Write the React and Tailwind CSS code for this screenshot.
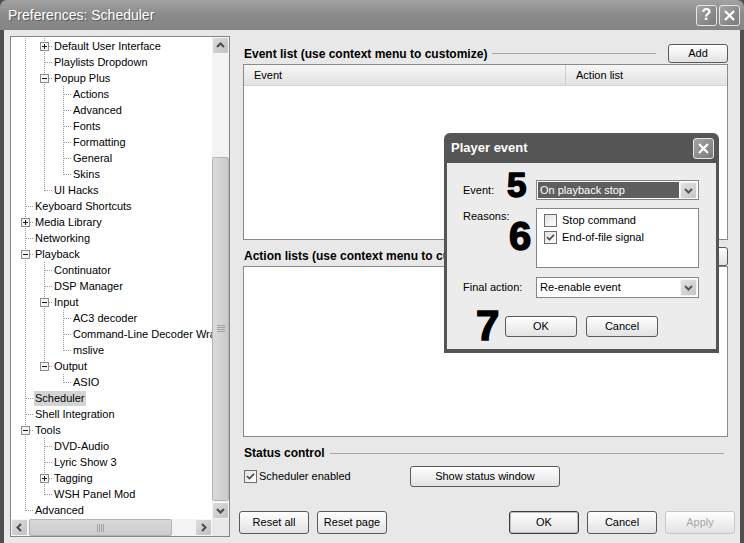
import React from 'react';

const tree = [
  [1, 'Default User Interface', 'plus'],
  [1, 'Playlists Dropdown'],
  [1, 'Popup Plus', 'minus'],
  [2, 'Actions'],
  [2, 'Advanced'],
  [2, 'Fonts'],
  [2, 'Formatting'],
  [2, 'General'],
  [2, 'Skins'],
  [1, 'UI Hacks'],
  [0, 'Keyboard Shortcuts'],
  [0, 'Media Library', 'plus'],
  [0, 'Networking'],
  [0, 'Playback', 'minus'],
  [1, 'Continuator'],
  [1, 'DSP Manager'],
  [1, 'Input', 'minus'],
  [2, 'AC3 decoder'],
  [2, 'Command-Line Decoder Wrapper'],
  [2, 'mslive'],
  [1, 'Output', 'minus'],
  [2, 'ASIO'],
  [0, 'Scheduler', null, true],
  [0, 'Shell Integration'],
  [0, 'Tools', 'minus'],
  [1, 'DVD-Audio'],
  [1, 'Lyric Show 3'],
  [1, 'Tagging', 'plus'],
  [1, 'WSH Panel Mod'],
  [0, 'Advanced'],
];

// does a sibling at this level follow before the branch closes?
const hasNext = (i, lvl) => {
  for (let j = i + 1; j < tree.length; j++) {
    if (tree[j][0] < lvl) return false;
    if (tree[j][0] === lvl) return true;
  }
  return false;
};

function TreeRow({ i }) {
  const [level, label, exp, selected] = tree[i];
  const cx = 14.5 + 19 * level;
  const w = 23 + 19 * level;
  return (
    <div className="flex h-[16px] items-center whitespace-nowrap">
      <svg width={w} height="16" className="shrink-0" shapeRendering="crispEdges">
        <g stroke="#9a9a9a" strokeDasharray="1 1">
          {Array.from({ length: level }, (_, a) =>
            hasNext(i, a) ? <line key={a} x1={14.5 + 19 * a} y1="0" x2={14.5 + 19 * a} y2="16" /> : null
          )}
          <line x1={cx} y1="0" x2={cx} y2={hasNext(i, level) ? 16 : 9} />
          <line x1={cx} y1="8.5" x2={w - 1} y2="8.5" />
        </g>
        {exp && (
          <g>
            <rect x={cx - 4} y="4.5" width="8" height="8" fill="#f4f4f4" stroke="#8c8c8c" />
            <line x1={cx - 2.5} y1="8.5" x2={cx + 2.5} y2="8.5" stroke="#1a1a1a" />
            {exp === 'plus' && <line x1={cx} y1="6" x2={cx} y2="11" stroke="#1a1a1a" />}
          </g>
        )}
      </svg>
      <span className={`px-[1px] leading-[15px] ${selected ? 'bg-[#d4d4d4]' : ''}`}>{label}</span>
    </div>
  );
}

const chevrons = {
  up: 'M4.5 9.5 L8 6 L11.5 9.5',
  down: 'M4.5 6.5 L8 10 L11.5 6.5',
  left: 'M9.5 4.5 L6 8 L9.5 11.5',
  right: 'M6.5 4.5 L10 8 L6.5 11.5',
};

function Chevron({ dir, color = '#4a4a4a' }) {
  return (
    <svg width="15" height="15" viewBox="0.5 0.5 15 15">
      <path d={chevrons[dir]} fill="none" stroke={color} strokeWidth="2" />
    </svg>
  );
}

function ScrollBtn({ dir }) {
  return (
    <div className="flex h-[17px] w-[17px] shrink-0 items-center justify-center rounded-[2px] border border-[#f6f6f6] bg-gradient-to-br from-[#dcdcdc] to-[#c2c2c2]">
      <Chevron dir={dir} />
    </div>
  );
}

function Grip({ vertical }) {
  return vertical ? (
    <svg width="8" height="8" shapeRendering="crispEdges">
      {[0.5, 2.5, 4.5, 6.5].map((y) => (
        <line key={y} x1="0" y1={y} x2="8" y2={y} stroke="#a2a2a2" />
      ))}
    </svg>
  ) : (
    <svg width="8" height="8" shapeRendering="crispEdges">
      {[0.5, 2.5, 4.5, 6.5].map((x) => (
        <line key={x} x1={x} y1="0" x2={x} y2="8" stroke="#a2a2a2" />
      ))}
    </svg>
  );
}

function TreePanel() {
  return (
    <div className="flex h-[501px] w-[220px] shrink-0 flex-col border border-[#858585] bg-white">
      <div className="flex h-[482px]">
        <div className="w-[201px] overflow-hidden pt-[1px]">
          {tree.map((_, i) => (
            <TreeRow key={i} i={i} />
          ))}
        </div>
        <div className="flex w-[17px] flex-col bg-[#f3f3f3]">
          <ScrollBtn dir="up" />
          <div className="flex flex-1 flex-col pb-[1px]">
            <div className="h-[103px]" />
            <div className="flex flex-1 items-center justify-center rounded-[2px] border border-[#b4b4b4] bg-gradient-to-r from-[#dadada] to-[#cbcbcb]">
              <Grip vertical />
            </div>
          </div>
          <ScrollBtn dir="down" />
        </div>
      </div>
      <div className="flex h-[17px]">
        <div className="flex w-[201px] bg-[#f3f3f3]">
          <ScrollBtn dir="left" />
          <div className="flex flex-1 px-[1px]">
            <div className="flex w-[143px] items-center justify-center rounded-[2px] border border-[#b4b4b4] bg-gradient-to-b from-[#dadada] to-[#cbcbcb]">
              <Grip />
            </div>
          </div>
          <ScrollBtn dir="right" />
        </div>
        <div className="w-[17px] bg-[#e8e8e8]" />
      </div>
    </div>
  );
}

function Btn({ children, className = '', disabled, strong }) {
  return (
    <button
      type="button"
      className={`flex shrink-0 items-center justify-center rounded-[3px] border bg-gradient-to-b from-white to-[#e2e2e2] ${
        disabled ? 'border-[#c6c6c6] text-[#a8a8a8]' : strong ? 'border-[#3c3c3c] shadow-[inset_0_0_0_1px_#bdbdbd]' : 'border-[#5a5a5a]'
      } ${className}`}
    >
      {children}
    </button>
  );
}

function Check({ checked }) {
  return (
    <span className="flex h-[13px] w-[13px] shrink-0 items-center justify-center border border-[#6e6e6e] bg-gradient-to-br from-[#e2e2e2] to-white">
      {checked && (
        <svg width="9" height="9" viewBox="0 0 9 9">
          <path d="M1 4.2 L3.4 6.6 L8 1.8" fill="none" stroke="#4c4c4c" strokeWidth="1.7" />
        </svg>
      )}
    </span>
  );
}

function GroupHead({ title, add, className = '' }) {
  return (
    <div className={`flex items-center ${className}`}>
      <span className="whitespace-nowrap pl-[1px] text-[12px] font-bold">{title}</span>
      <div className="ml-[5px] mr-[4px] h-px flex-1 bg-[#a6a6a6]" />
      {add && <Btn className="ml-[8px] h-[19px] w-[60px]">Add</Btn>}
    </div>
  );
}

function RightPane() {
  return (
    <div className="ml-[9px] flex w-[496px] flex-col">
      <div className="flex flex-col pl-[4px] pr-[7px]">
        <GroupHead title="Event list (use context menu to customize)" add className="mt-[8px] h-[19px]" />
        <div className="mt-[1px] h-[176px] border border-[#8a8a8a] bg-white">
          <div className="flex h-[21px] items-center border-b border-[#d2d2d2] bg-gradient-to-b from-[#f6f6f6] to-[#e2e2e2]">
            <div className="flex h-full w-[322px] items-center border-r border-[#cfcfcf] pl-[10px]">Event</div>
            <div className="pl-[10px]">Action list</div>
          </div>
        </div>
        <GroupHead title="Action lists (use context menu to customize)" add className="mt-[7px] h-[18px]" />
        <div className="mt-[1px] h-[171px] border border-[#8a8a8a] bg-white" />
        <GroupHead title="Status control" className="mt-[8px] h-[16px]" />
        <div className="mt-[5px] flex h-[21px] items-center">
          <div className="flex w-[167px] items-center gap-[2px] pl-[1px]">
            <Check checked />
            <span>Scheduler enabled</span>
          </div>
          <Btn className="h-[21px] w-[150px]">Show status window</Btn>
        </div>
      </div>
      <div className="mt-[24px] flex h-[23px] items-center">
        <Btn className="h-[23px] w-[70px]">Reset all</Btn>
        <Btn className="ml-[8px] h-[23px] w-[70px]">Reset page</Btn>
        <div className="flex-1" />
        <Btn strong className="h-[23px] w-[70px]">OK</Btn>
        <Btn className="ml-[8px] h-[23px] w-[70px]">Cancel</Btn>
        <Btn disabled className="ml-[8px] h-[23px] w-[70px]">Apply</Btn>
      </div>
    </div>
  );
}

function CapBtn({ children }) {
  return (
    <div className="flex h-[21px] w-[21px] items-center justify-center rounded-[3px] border border-[#e6e6e6] bg-gradient-to-br from-[#a4a4a4] to-[#7a7a7a]">
      {children}
    </div>
  );
}

const CloseX = () => (
  <svg width="13" height="13" viewBox="0 0 13 13">
    <path d="M2 2 L11 11 M11 2 L2 11" stroke="#fff" strokeWidth="2.2" />
  </svg>
);

function ComboArrow() {
  return (
    <span className="flex h-[17px] w-[17px] items-center justify-center rounded-[2px] border border-[#f4f4f4] bg-gradient-to-br from-[#e2e2e2] to-[#c6c6c6]">
      <Chevron dir="down" color="#555" />
    </span>
  );
}

const digit = "absolute font-bold leading-none text-black [-webkit-text-stroke:1.5px_black] font-['Liberation_Sans',Arial,sans-serif]";

function PlayerEvent() {
  return (
    <div className="absolute left-[444px] top-[133px] flex h-[220px] w-[275px] flex-col rounded-t-[6px] bg-[#555555] px-[3px] pb-[4px]">
      <div className="flex h-[30px] items-center justify-between pl-[4px] pr-[2px]">
        <span className="text-[13px] font-bold text-white">Player event</span>
        <CapBtn>
          <CloseX />
        </CapBtn>
      </div>
      <div className="flex flex-1 flex-col bg-[#ececec] pl-[16px] pt-[17px]">
        <div className="flex h-[20px] items-center">
          <span className="w-[73px]">Event:</span>
          <div className="flex h-[20px] w-[163px] items-center border border-[#868686] bg-white p-[1px]">
            <span className="flex h-full flex-1 items-center bg-[#5e5e5e] pl-[2px] text-white">On playback stop</span>
            <span className="ml-[1px]">
              <ComboArrow />
            </span>
          </div>
        </div>
        <div className="mt-[8px] flex">
          <span className="w-[73px]">Reasons:</span>
          <div className="flex h-[60px] w-[163px] flex-col border border-[#868686] bg-white pl-[7px] pt-[3px]">
            <div className="flex h-[17px] items-center gap-[5px]">
              <Check />
              <span>Stop command</span>
            </div>
            <div className="flex h-[17px] items-center gap-[5px]">
              <Check checked />
              <span>End-of-file signal</span>
            </div>
          </div>
        </div>
        <div className="mt-[9px] flex h-[21px] items-center">
          <span className="w-[73px]">Final action:</span>
          <div className="flex h-[21px] w-[163px] items-center border border-[#868686] bg-white p-[1px]">
            <span className="flex-1 pl-[2px]">Re-enable event</span>
            <ComboArrow />
          </div>
        </div>
        <div className="mt-[18px] flex h-[21px] pl-[42px]">
          <Btn className="h-[21px] w-[72px]">OK</Btn>
          <Btn className="ml-[9px] h-[21px] w-[72px]">Cancel</Btn>
        </div>
      </div>
      <span className={`${digit} left-[63px] top-[34px] text-[35px]`}>5</span>
      <span className={`${digit} left-[65px] top-[83px] text-[40px]`}>6</span>
      <span className={`${digit} left-[32px] top-[172px] text-[42px]`}>7</span>
    </div>
  );
}

export default function App() {
  return (
    <div className="relative h-[543px] w-[744px] overflow-hidden bg-[#4e4e4e] font-['Liberation_Sans',Arial,sans-serif] text-[11px] text-black">
      <div className="flex h-[30px] items-center justify-between rounded-t-[7px] bg-gradient-to-b from-[#a2a2a2] via-[#8a8a8a] to-[#858585] pl-[8px] pr-[4px]">
        <span className="text-[14px] text-white [text-shadow:1px_1px_0_#5a5a5a]">Preferences: Scheduler</span>
        <div className="flex gap-[2px]">
          <CapBtn>
            <span className="text-[16px] font-bold leading-none text-white">?</span>
          </CapBtn>
          <CapBtn>
            <CloseX />
          </CapBtn>
        </div>
      </div>
      <div className="mx-[4px] flex h-[513px] bg-[#e8e8e8] pl-[6px] pt-[6px]">
        <TreePanel />
        <RightPane />
      </div>
      <PlayerEvent />
    </div>
  );
}
